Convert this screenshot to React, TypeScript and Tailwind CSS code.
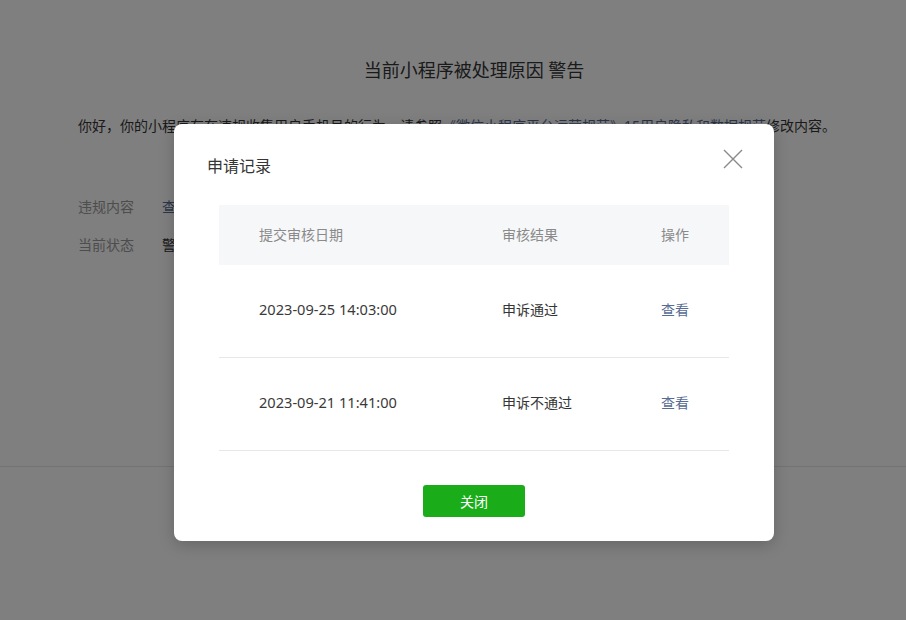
import React from "react";

const rows = [
  { date: "2023-09-25 14:03:00", result: "申诉通过" },
  { date: "2023-09-21 11:41:00", result: "申诉不通过" },
];

export default function App() {
  return (
    <div
      className="relative h-[620px] w-full overflow-hidden bg-white text-[#353535]"
      style={{ fontFamily: '"Noto Sans", "Noto Sans CJK SC", sans-serif' }}
    >
      {/* underlying page */}
      <div className="h-[467px] border-b border-[#e7e7eb]">
        <div className="pt-[57px] pl-[42px] text-center text-[18px] leading-[26px] text-[#353535]">
          当前小程序被处理原因 警告
        </div>
        <p className="mt-[32px] pl-[78px] text-[14px] leading-[22px] text-[#353535]">
          你好，你的小程序存在违规收集用户手机号的行为，请参照
          <span className="text-[#576b95]">《微信小程序平台运营规范》15用户隐私和数据规范</span>
          修改内容。
        </p>
        <div className="mt-[59px] flex flex-col gap-[16px] pl-[78px] text-[14px] leading-[22px]">
          <div className="flex">
            <span className="w-[84px] text-[#9a9a9a]">违规内容</span>
            <span className="text-[#576b95]">查看详情</span>
          </div>
          <div className="flex">
            <span className="w-[84px] text-[#9a9a9a]">当前状态</span>
            <span>警告</span>
          </div>
        </div>
      </div>

      {/* overlay */}
      <div className="absolute inset-0 bg-black/50" />

      {/* modal */}
      <div className="absolute left-[174px] top-[124px] w-[600px] rounded-[8px] bg-white pb-[24px] shadow-[0_4px_16px_rgba(0,0,0,0.2)]">
        <div className="relative px-[33px] pt-[30px]">
          <div className="text-[16px] leading-[24px] text-[#353535]">申请记录</div>
          <button className="absolute right-[31px] top-[25px] flex h-[20px] w-[20px] items-center justify-center">
            <svg width="20" height="20" viewBox="0 0 20 20" fill="none">
              <path d="M1 1 L19 19 M19 1 L1 19" stroke="#8a8a8a" strokeWidth="1.4" />
            </svg>
          </button>
        </div>

        <div className="mx-[45px] mt-[27px]">
          <div className="flex h-[60px] items-center bg-[#f6f7f9] pb-[1px] text-[14px] text-[#8a8a8a]">
            <div className="w-[283px] pl-[40px]">提交审核日期</div>
            <div className="w-[159px]">审核结果</div>
            <div className="flex-1">操作</div>
          </div>
          {rows.map((r) => (
            <div
              key={r.date}
              className="flex h-[93px] items-center border-b border-[#e7e7eb] pb-[3px] text-[14px] text-[#353535]"
            >
              <div className="w-[283px] pl-[40px] text-[14.6px] text-[#3a3a3a]">{r.date}</div>
              <div className="w-[159px]">{r.result}</div>
              <div className="flex-1 text-[#576b95]">查看</div>
            </div>
          ))}
        </div>

        <div className="mt-[34px] flex justify-center">
          <button className="h-[32px] w-[102px] rounded-[3px] bg-[#1aad19] text-[14px] text-white">
            关闭
          </button>
        </div>
      </div>
    </div>
  );
}
